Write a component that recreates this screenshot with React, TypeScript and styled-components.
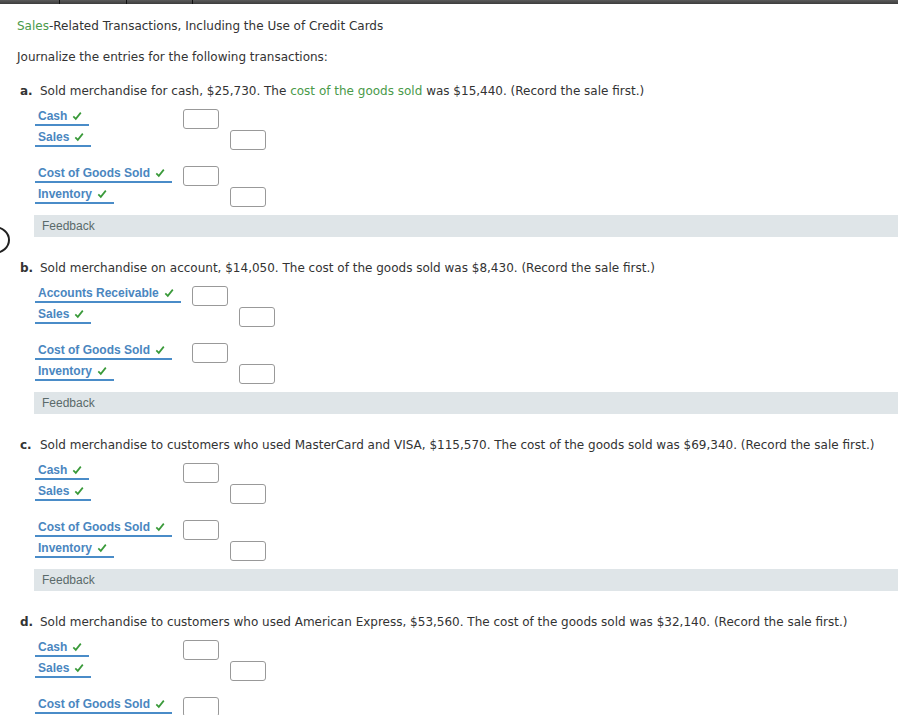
import styled, { createGlobalStyle } from "styled-components";

const GlobalStyle = createGlobalStyle`
  html, body {
    margin: 0;
    padding: 0;
    background: #fff;
  }
  body {
    font-family: "DejaVu Sans", Verdana, sans-serif;
    font-size: 12px;
    color: #333;
  }
`;

type Entry = { account: string; side: "debit" | "credit" };

type Part = {
  letter: string;
  text: React.ReactNode;
  entries: Entry[][];
};

const saleEntries = (first: string): Entry[][] => [
  [
    { account: first, side: "debit" },
    { account: "Sales", side: "credit" },
  ],
  [
    { account: "Cost of Goods Sold", side: "debit" },
    { account: "Inventory", side: "credit" },
  ],
];

const parts: Part[] = [
  {
    letter: "a.",
    text: (
      <>
        Sold merchandise for cash, $25,730. The <Green>cost of the goods sold</Green> was $15,440.
        (Record the sale first.)
      </>
    ),
    entries: saleEntries("Cash"),
  },
  {
    letter: "b.",
    text: "Sold merchandise on account, $14,050. The cost of the goods sold was $8,430. (Record the sale first.)",
    entries: saleEntries("Accounts Receivable"),
  },
  {
    letter: "c.",
    text: "Sold merchandise to customers who used MasterCard and VISA, $115,570. The cost of the goods sold was $69,340. (Record the sale first.)",
    entries: saleEntries("Cash"),
  },
  {
    letter: "d.",
    text: "Sold merchandise to customers who used American Express, $53,560. The cost of the goods sold was $32,140. (Record the sale first.)",
    entries: saleEntries("Cash"),
  },
];

function Green({ children }: { children: React.ReactNode }) {
  return <GreenText>{children}</GreenText>;
}

const Check = () => (
  <CheckIcon viewBox="0 0 10 10" aria-hidden>
    <path d="M1.3 5.4 L3.8 7.9 L8.8 1.6" fill="none" stroke="#3a9a3a" strokeWidth="1.7" />
  </CheckIcon>
);

export default function App() {
  return (
    <Page>
      <GlobalStyle />
      <TopBar>
        <TopTab $w={59} />
        <TopTab $w={66} />
        <TopTab $w={65} />
      </TopBar>
      <EdgeButton />
      <Content>
        <Title>
          <GreenText>Sales</GreenText>-Related Transactions, Including the Use of Credit Cards
        </Title>
        <Intro>Journalize the entries for the following transactions:</Intro>
        {parts.map((p) => (
          <Section key={p.letter}>
            <Question>
              <Letter>{p.letter}</Letter>
              <span>{p.text}</span>
            </Question>
            <Journal>
              <tbody>
                {p.entries.flatMap((group, gi) => [
                  ...(gi > 0
                    ? [
                        <SpacerRow key={`s${gi}`}>
                          <td colSpan={3} />
                        </SpacerRow>,
                      ]
                    : []),
                  ...group.map((e, i) => (
                    <Row key={`${gi}-${i}`}>
                      <AccountCell>
                        <AccountLink>
                          {e.account}
                          <Check />
                        </AccountLink>
                      </AccountCell>
                      <AmountCell>{e.side === "debit" && <AmountBox />}</AmountCell>
                      <AmountCell $credit>{e.side === "credit" && <AmountBox />}</AmountCell>
                    </Row>
                  )),
                ])}
              </tbody>
            </Journal>
            <Feedback>Feedback</Feedback>
          </Section>
        ))}
      </Content>
    </Page>
  );
}

const Page = styled.div`
  position: relative;
  width: 898px;
  height: 715px;
  overflow: hidden;
`;

const TopBar = styled.div`
  height: 4px;
  display: flex;
  background: linear-gradient(#5a5a5a, #3c3c3c);
`;

const TopTab = styled.div<{ $w: number }>`
  width: ${(p) => p.$w}px;
  border-right: 1px solid #111;
`;

const EdgeButton = styled.div`
  position: absolute;
  left: -22px;
  top: 226px;
  width: 28px;
  height: 24px;
  border: 2px solid #222;
  border-radius: 50%;
`;

const Content = styled.div`
  padding: 15px 0 0 17px;
`;

const GreenText = styled.span`
  color: #4a9a4a;
`;

const Title = styled.div`
  line-height: 14px;
`;

const Intro = styled.div`
  margin-top: 17px;
  line-height: 14px;
`;

const Section = styled.div`
  margin-top: 20px;
  & + & {
    margin-top: 24px;
  }
`;

const Question = styled.div`
  display: flex;
  line-height: 14px;
  white-space: nowrap;
`;

const Letter = styled.span`
  font-weight: bold;
  width: 23px;
  padding-left: 3px;
  box-sizing: border-box;
  flex-shrink: 0;
`;

const Journal = styled.table`
  border-collapse: collapse;
  margin: 10px 0 0 18px;
`;

const Row = styled.tr`
  height: 21px;
`;

const SpacerRow = styled.tr`
  height: 15px;
`;

const AccountCell = styled.td`
  padding: 0 11px 0 0;
  vertical-align: top;
`;

const AccountLink = styled.span`
  display: inline-flex;
  align-items: center;
  gap: 5px;
  padding: 1px 7px 1px 3px;
  border-bottom: 2px solid #4a8cc8;
  color: #4a86c0;
  font-family: Tahoma, "Liberation Sans", Arial, sans-serif;
  font-weight: bold;
  font-size: 12px;
  line-height: 14px;
`;

const CheckIcon = styled.svg`
  width: 10px;
  height: 10px;
`;

const AmountCell = styled.td<{ $credit?: boolean }>`
  padding: 0 0 0 ${(p) => (p.$credit ? 11 : 0)}px;
  width: 36px;
  vertical-align: top;
`;

const AmountBox = styled.div`
  width: 34px;
  height: 18px;
  border: 1px solid #999;
  border-radius: 3px;
  background: #fff;
  margin-top: 1px;
`;

const Feedback = styled.div`
  margin: 8px 0 0 17px;
  height: 22px;
  line-height: 22px;
  padding-left: 8px;
  background: #dfe5e8;
  color: #5a6a6a;
  font-family: "Liberation Sans", Arial, sans-serif;
  font-size: 12px;
`;
